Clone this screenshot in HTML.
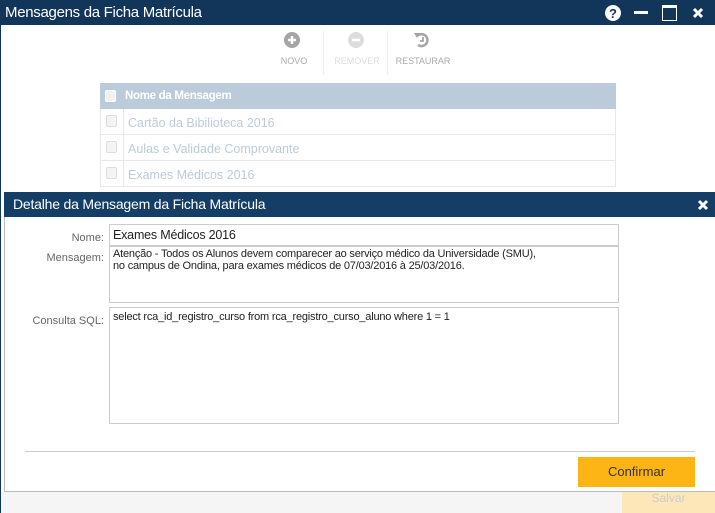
<!DOCTYPE html>
<html><head><meta charset="utf-8"><style>
*{box-sizing:border-box;margin:0;padding:0}
body{width:715px;height:513px;overflow:hidden;background:#fff;font-family:"Liberation Sans",sans-serif;position:relative;font-size:12px}
.abs{position:absolute}
.tb{left:0;top:0;width:715px;height:25px;background:#12355a;color:#fff;font-size:15px;line-height:25px;padding-left:5px;letter-spacing:-0.3px}
.lb{left:0;top:25px;width:1px;height:488px;background:#12355a}
.tool{color:#aaa;font-size:9px;text-align:center}
.grid{left:100px;top:83px;width:516px}
.gh{height:26px;background:#bccbd9;color:#fff;font-weight:bold;font-size:11.5px;line-height:26px;padding-left:25px;position:relative;letter-spacing:-0.3px}
.gr{height:26px;border-bottom:1px solid #e8e8e8;border-left:1px solid #e8e8e8;border-right:1px solid #e8e8e8;color:#bccbd9;font-size:12.5px;line-height:28px;padding-left:27px;position:relative}
.gr:before{content:"";position:absolute;left:22px;top:0;bottom:0;width:1px;background:#e8e8e8}
.cb{position:absolute;left:5px;top:6px;width:11px;height:12px;border:1px solid #ddd;border-radius:2px;background:#f4f4f4}
.gh .cb{left:5px;top:7px;background:#f2f2f2;border-color:#fff}
.dlg{left:4px;top:192px;width:711px;height:300px;border:1px solid #bbb;border-right:none;background:#fff}
.dh{left:4px;top:192px;width:711px;height:25px;background:#143e66;color:#fff;font-size:14px;line-height:25px;padding-left:9px;letter-spacing:-0.2px}
.lbl{color:#666;font-size:11px;text-align:right;width:104px;left:0}
.inp{left:109px;width:510px;border:1px solid #ccc;font-size:11px;color:#222;padding:2px 3px;line-height:12px;letter-spacing:-0.2px}
</style></head><body>
<div class="abs tb">Mensagens da Ficha Matrícula</div>
<svg class="abs" style="left:604px;top:4px" width="18" height="18"><circle cx="9" cy="9" r="8" fill="#fff"/><text x="9" y="14" font-size="13" font-weight="bold" text-anchor="middle" fill="#12355a" font-family="Liberation Sans">?</text></svg>
<div class="abs" style="left:634px;top:11px;width:14px;height:3px;background:#fff"></div>
<div class="abs" style="left:662px;top:5px;width:15px;height:16px;border:1.5px solid #fff;border-top-width:3px"></div>
<svg class="abs" style="left:692px;top:7px" width="12" height="12"><path d="M2 2L10 10M10 2L2 10" stroke="#fff" stroke-width="3"/></svg>
<div class="abs lb"></div>
<svg class="abs" style="left:284px;top:32px" width="16" height="16"><circle cx="8" cy="8" r="8" fill="#a5a5a5"/><path d="M8 4v8M4 8h8" stroke="#fff" stroke-width="2.5"/></svg>
<div class="abs tool" style="left:272px;top:56px;width:44px">NOVO</div>
<div class="abs" style="left:323px;top:31px;width:1px;height:44px;background:#eee"></div>
<svg class="abs" style="left:348px;top:32px" width="16" height="16"><circle cx="8" cy="8" r="8" fill="#ddd"/><path d="M4 8h8" stroke="#fff" stroke-width="2.5"/></svg>
<div class="abs tool" style="left:332px;top:56px;width:50px;color:#ddd">REMOVER</div>
<div class="abs" style="left:387px;top:31px;width:1px;height:44px;background:#eee"></div>
<svg class="abs" style="left:413px;top:31px" width="18" height="18"><path d="M4 5A6 6 0 1 1 5 14" fill="none" stroke="#a5a5a5" stroke-width="2.5"/><path d="M1 2l6 0l-3 5z" fill="#a5a5a5"/><path d="M10 6v4h-3" fill="none" stroke="#a5a5a5" stroke-width="1.8"/></svg>
<div class="abs tool" style="left:392px;top:56px;width:62px">RESTAURAR</div>
<div class="abs grid">
<div class="gh"><span class="cb"></span>Nome da Mensagem</div>
<div class="gr"><span class="cb"></span>Cartão da Bibilioteca 2016</div>
<div class="gr"><span class="cb"></span>Aulas e Validade Comprovante</div>
<div class="gr"><span class="cb"></span>Exames Médicos 2016</div>
</div>
<div class="abs dlg"></div>
<div class="abs dh">Detalhe da Mensagem da Ficha Matrícula</div>
<svg class="abs" style="left:697px;top:199px" width="12" height="12"><path d="M2 2L10 10M10 2L2 10" stroke="#fff" stroke-width="3"/></svg>
<div class="abs lbl" style="top:232px">Nome:</div>
<div class="abs inp" style="top:224px;height:22px;font-size:12.5px;line-height:16px">Exames Médicos 2016</div>
<div class="abs lbl" style="top:252px">Mensagem:</div>
<div class="abs inp" style="top:246px;height:57px;padding-top:1px">Atenção - Todos os Alunos devem comparecer ao serviço médico da Universidade (SMU),<br>no campus de Ondina, para exames médicos de 07/03/2016 à 25/03/2016.</div>
<div class="abs lbl" style="top:315px">Consulta SQL:</div>
<div class="abs inp" style="top:307px;height:117px;padding-top:3px">select rca_id_registro_curso from rca_registro_curso_aluno where 1 = 1</div>
<div class="abs" style="left:25px;top:451px;width:670px;height:1px;background:#ccc"></div>
<div class="abs" style="left:578px;top:457px;width:117px;height:30px;background:#fdb515;color:#333;font-size:13px;line-height:30px;text-align:center">Confirmar</div>
<div class="abs" style="left:1px;top:492px;width:714px;height:21px;background:#f5f5f5"></div>
<div class="abs" style="left:622px;top:492px;width:93px;height:21px;background:#fde6b8;color:#ccc;font-size:12px;line-height:12px;text-align:center">Salvar</div>
</body></html>
